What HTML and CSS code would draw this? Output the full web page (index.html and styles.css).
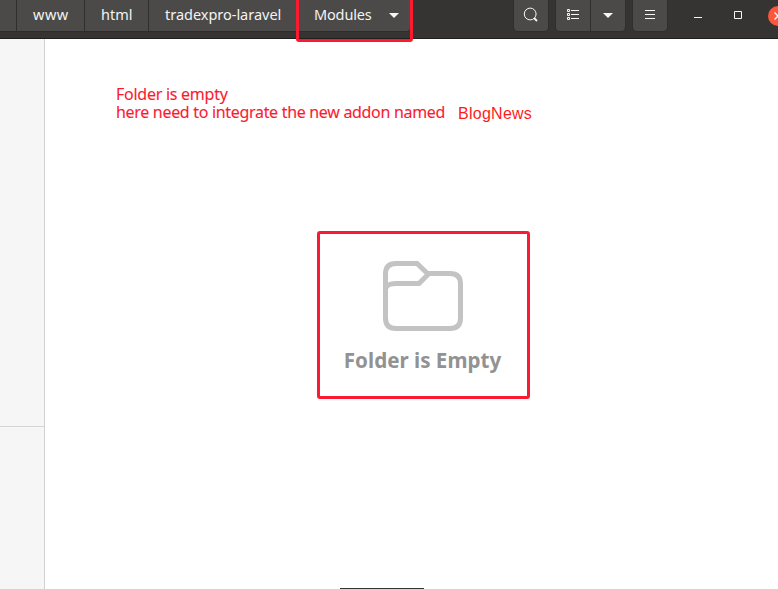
FILE: index.html
```html
<!DOCTYPE html>
<html lang="en">
<head>
<meta charset="utf-8">
<title>Modules</title>
<link rel="stylesheet" href="styles.css">
</head>
<body>
<div class="window">
  <header class="headerbar">
    <nav class="pathbar">
      <span class="crumb crumb-cut"></span>
      <span class="crumb crumb-www"><span>www</span></span>
      <span class="crumb crumb-html"><span>html</span></span>
      <span class="crumb crumb-project"><span>tradexpro-laravel</span></span>
      <span class="crumb crumb-current"><span>Modules</span>
        <svg class="caret" width="10" height="5" viewBox="0 0 10 5"><path d="M0 0h10L5 5z"/></svg>
      </span>
    </nav>
    <div class="tools">
      <span class="button">
        <svg width="16" height="16" viewBox="0 0 16 16"><circle cx="7.2" cy="7" r="5.9"/><path d="M11 11l3 3" stroke-width="1.8"/></svg>
      </span>
      <div class="split">
        <span class="button">
          <svg width="12" height="11" viewBox="0 0 12 11"><path d="M.5.5h2v2h-2zM.5 4.500h2v2h-2zM.5 8.500h2v2h-2zM4 1.500H12M4 5.500H12M4 9.500H12"/></svg>
        </span>
        <span class="button">
          <svg class="caret" width="10" height="5" viewBox="0 0 10 5"><path d="M0 0h10L5 5z"/></svg>
        </span>
      </div>
      <span class="button">
        <svg width="10" height="11" viewBox="0 0 10 11"><path d="M0 1.500h10M0 5.500h10M0 9.500h10"/></svg>
      </span>
    </div>
    <div class="controls">
      <svg width="8" height="9" viewBox="0 0 8 9"><path d="M0 6.500h8"/></svg>
      <svg width="8" height="9" viewBox="0 0 8 9"><path d="M.5.500h7v7h-7z"/></svg>
      <span class="close"><svg width="8" height="8" viewBox="0 0 8 8"><path d="M.5.5l7 7M7.500.5l-7 7" stroke-width="1.500"/></svg></span>
    </div>
  </header>
  <div class="body">
    <aside class="sidebar"><div class="places"></div></aside>
    <main class="content">
      <div class="note">
        <p class="note-first">Folder is empty</p>
        <p class="note-second"><span>here need to integrate the new addon named</span><span class="addon">BlogNews</span></p>
      </div>
      <section class="empty">
        <svg class="folder" width="80" height="70" viewBox="0 0 80 70"><path d="M2.5 57V13Q2.5 2.5 13 2.5H34L44.5 12.5H67Q77.500 12.500 77.500 23V57Q77.500 67.500 67 67.500H13Q2.500 67.500 2.500 57M2.500 28Q3.500 22.500 13 22.500H36L45 13.500"/></svg>
        <h1>Folder is Empty</h1>
      </section>
      <div class="dock-edge"></div>
    </main>
  </div>
  <div class="highlight"></div>
</div>
</body>
</html>
```
FILE: styles.css
```css
* { box-sizing: border-box; }
body { margin: 0; background: #fff; font-family: "Noto Sans", sans-serif; }
p, h1 { margin: 0; }
svg { display: block; flex: none; fill: none; stroke: #f6f6f5; }
.window { position: relative; width: 778px; height: 589px; overflow: hidden; display: flex; flex-direction: column; }
.headerbar { flex: none; height: 39px; display: flex; align-items: flex-start; background: #353432; border-bottom: 1px solid #201f1e; color: #f3f3f2; font-size: 14.5px; }
.pathbar { flex: none; display: flex; width: 514px; height: 31px; }
.crumb { flex: none; display: flex; align-items: center; padding-left: 16px; height: 31px; white-space: nowrap; background: #4b4a48; border-right: 1px solid #302f2d; box-shadow: 0 1px #2e2d2b; }
.crumb > span { line-height: 27px; padding-bottom: 3px; }
.crumb-cut { width: 17px; }
.crumb-www { width: 68px; letter-spacing: .5px; }
.crumb-html { width: 64px; }
.crumb-project { width: 149px; letter-spacing: -.02px; }
.crumb-current { width: 113px; letter-spacing: -.15px; border-radius: 0 0 4px 0; }
.crumb-current .caret { margin-left: 17px; }
.caret { fill: #f6f6f5; stroke: none; }
.tools { flex: none; display: flex; gap: 8px; }
.split { display: flex; gap: 1px; }
.button { flex: none; width: 34px; height: 31px; display: flex; align-items: center; justify-content: center; padding-bottom: 2px; background: #4b4a48; border-radius: 0 0 4px 4px; box-shadow: 0 0 0 1px #302f2d; }
.button .caret { margin-top: 2px; }
.split .button:first-child { border-radius: 0 0 0 4px; }
.split .button:last-child { border-radius: 0 0 4px 0; }
.controls { flex: none; display: flex; align-items: center; height: 31px; margin-left: 27px; gap: 32px; }
.close { flex: none; width: 20px; height: 20px; margin-left: -6px; border-radius: 50%; background: #fc573b; display: flex; align-items: center; justify-content: center; }
.body { flex: 1; display: flex; min-height: 0; }
.sidebar { flex: none; width: 45px; background: #f6f6f6; border-right: 1px solid #d2d2d2; }
.places { height: 388px; border-bottom: 1px solid #d5d5d5; }
.content { flex: 1; display: flex; flex-direction: column; }
.note { margin: 46px 0 0 71px; color: #fb1a30; font-size: 16px; line-height: 18px; white-space: nowrap; -webkit-text-stroke: .1px; }
.note p { display: flex; height: 18px; }
.note-first { letter-spacing: -.26px; }
.note-second { letter-spacing: -.31px; }
.addon { margin-left: 13px; padding-top: 2px; color: #ff1c1c; font-family: "Liberation Sans", sans-serif; font-size: 16px; letter-spacing: .25px; -webkit-text-stroke: 0; }
.empty { width: 213px; height: 168px; margin: 110px 0 0 272px; border: 3px solid #fb1a30; border-radius: 3px; display: flex; flex-direction: column; align-items: center; padding: 27px 2px 0 0; }
.folder { stroke: #c3c3c3; stroke-width: 5; }
.empty h1 { margin-top: 14px; color: #929292; font-size: 20.6px; line-height: 30px; font-weight: 700; white-space: nowrap; }
.dock-edge { width: 84px; height: 1px; margin: auto 0 0 295px; background: #333; }
.highlight { position: absolute; left: 296px; top: -4px; width: 117px; height: 46px; border: 3px solid #fb1a30; border-radius: 3px; }
```
